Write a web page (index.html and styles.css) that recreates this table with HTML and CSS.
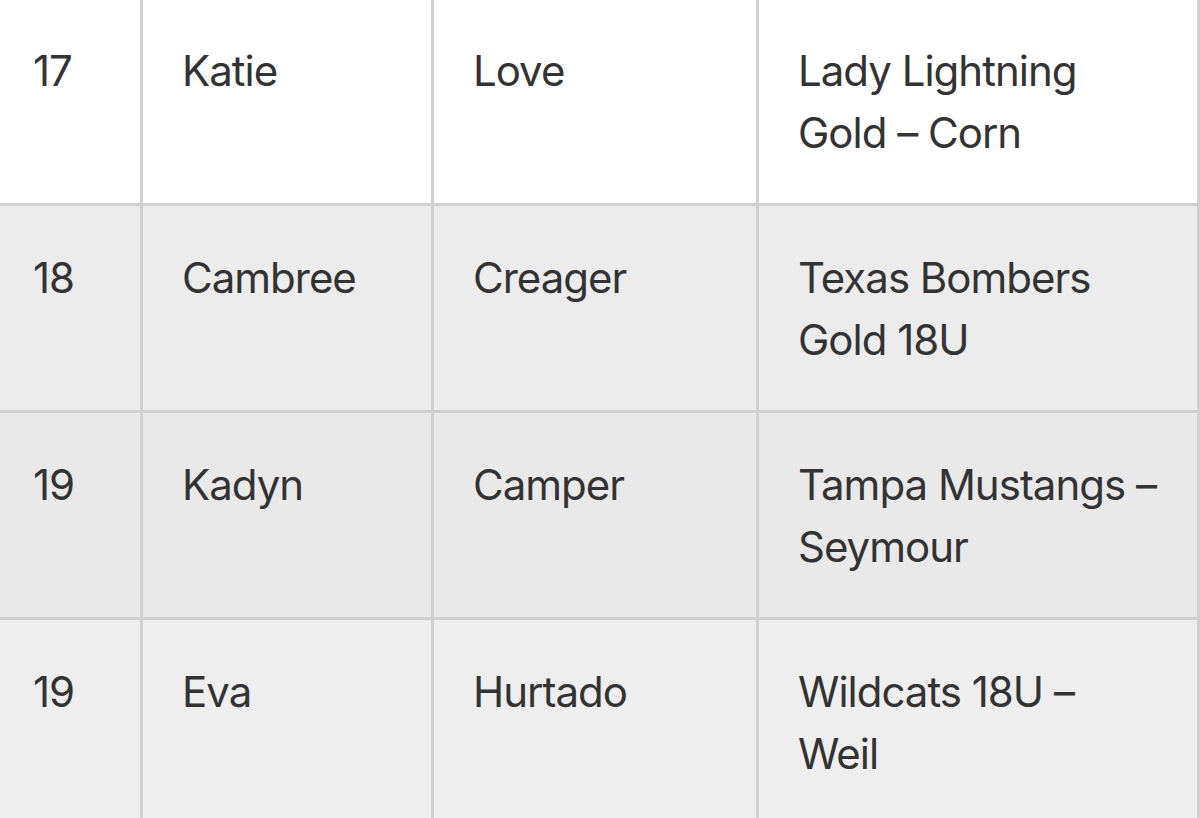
FILE: index.html
```html
<!DOCTYPE html>
<html>
<head>
<meta charset="utf-8">
<link rel="stylesheet" href="styles.css">
</head>
<body>
<table class="roster">
  <colgroup>
    <col class="c-num">
    <col class="c-first">
    <col class="c-last">
    <col class="c-team">
  </colgroup>
  <tr class="row row-white">
    <td>17</td>
    <td>Katie</td>
    <td>Love</td>
    <td>Lady Lightning<br>Gold – Corn</td>
  </tr>
  <tr class="row row-grey">
    <td>18</td>
    <td>Cambree</td>
    <td>Creager</td>
    <td>Texas Bombers<br>Gold 18U</td>
  </tr>
  <tr class="row row-dark">
    <td>19</td>
    <td>Kadyn</td>
    <td>Camper</td>
    <td>Tampa Mustangs –<br>Seymour</td>
  </tr>
  <tr class="row row-light">
    <td>19</td>
    <td>Eva</td>
    <td>Hurtado</td>
    <td>Wildcats 18U –<br>Weil</td>
  </tr>
</table>
</body>
</html>
```
FILE: styles.css
```css
html, body {
  margin: 0;
  padding: 0;
  background: #ffffff;
  overflow: hidden;
}
body {
  width: 1200px;
  height: 818px;
}
.roster {
  border-collapse: collapse;
  margin-top: -4px;
  margin-left: -9px;
  table-layout: fixed;
  width: 1206px;
  font-family: "Inter", "Open Sans", sans-serif;
  font-size: 42px;
  line-height: 62px;
  letter-spacing: -1px;
  color: #333333;
}
.roster td {
  border: 3px solid #d0d0d0;
  padding: 41px 20px 39px 39px;
  vertical-align: top;
  white-space: nowrap;
  overflow: hidden;
}
.c-num { width: 149px; }
.c-first { width: 291px; }
.c-last { width: 325px; }
.c-team { width: 441px; }
.row-white { background: #ffffff; }
.row-grey { background: #ececec; }
.row-dark { background: #e9e9e9; }
.row-light { background: #eeeeee; }
```
